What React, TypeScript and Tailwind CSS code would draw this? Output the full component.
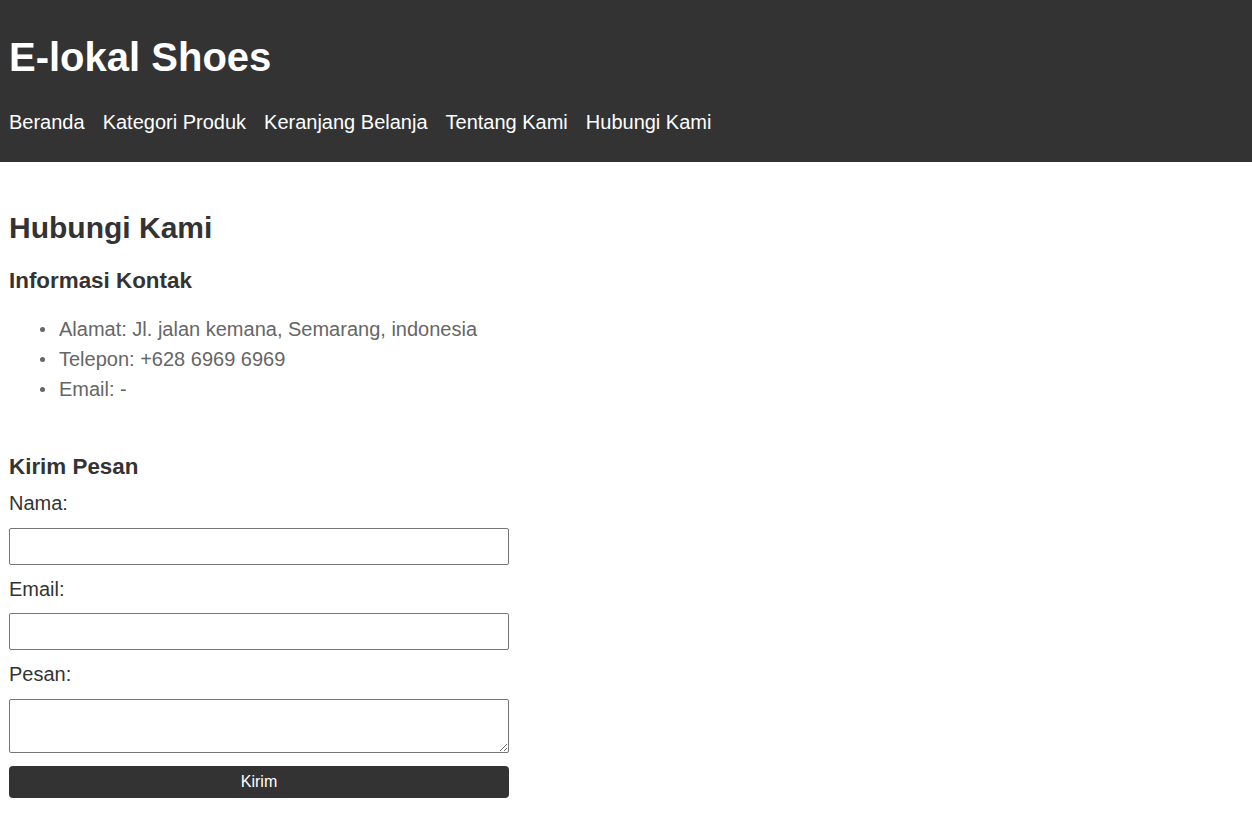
const navItems = ['Beranda', 'Kategori Produk', 'Keranjang Belanja', 'Tentang Kami', 'Hubungi Kami']

const contactInfo = [
  'Alamat: Jl. jalan kemana, Semarang, indonesia',
  'Telepon: +628 6969 6969',
  'Email: -',
]

function Header() {
  return (
    <header className="h-[162px] bg-[#333333] pl-[9px] pt-[34px] text-white">
      <h1 className="text-[40px] font-bold leading-[46px]">E-lokal Shoes</h1>
      <nav className="mt-[30.5px] flex gap-[18px] text-[20px] leading-[23px]">
        {navItems.map((item) => (
          <a key={item} href="#" className="text-white">
            {item}
          </a>
        ))}
      </nav>
    </header>
  )
}

function ContactForm() {
  return (
    <form className="flex flex-col" onSubmit={(e) => e.preventDefault()}>
      <label htmlFor="nama" className="mt-[8px] block text-[20px] leading-[30px] text-[#333333]">
        Nama:
      </label>
      <input
        id="nama"
        type="text"
        className="mt-[10px] h-[37px] w-[500px] rounded-[2px] border border-[#767676] bg-white px-2"
      />

      <label htmlFor="email" className="mt-[9px] block text-[20px] leading-[30px] text-[#333333]">
        Email:
      </label>
      <input
        id="email"
        type="email"
        className="mt-[9px] h-[37px] w-[500px] rounded-[2px] border border-[#767676] bg-white px-2"
      />

      <label htmlFor="pesan" className="mt-[9px] block text-[20px] leading-[30px] text-[#333333]">
        Pesan:
      </label>
      <textarea
        id="pesan"
        className="mt-[10px] h-[54px] w-[500px] rounded-[2px] border border-[#767676] bg-white px-2"
      />

      <button
        type="submit"
        className="mt-[13px] h-[32px] w-[500px] rounded-[4px] bg-[#333333] text-[16px] text-white"
      >
        Kirim
      </button>
    </form>
  )
}

export default function App() {
  return (
    <div className="min-h-[832px] bg-white font-['Liberation_Sans',Arial,sans-serif]">
      <Header />

      <main className="pl-[9px]">
        <h2 className="mt-[48px] text-[30px] font-bold leading-[35px] text-[#333333]">Hubungi Kami</h2>

        <h3 className="mt-[23px] text-[22.4px] font-bold leading-[26px] text-[#333333]">Informasi Kontak</h3>
        <ul className="mt-[20px] flex flex-col text-[20px] leading-[30px] text-[#666666]">
          {contactInfo.map((line) => (
            <li key={line} className="flex items-center">
              <span className="ml-[31px] mr-[14px] h-[5px] w-[5px] rounded-full bg-[#666666]" />
              <span>{line}</span>
            </li>
          ))}
        </ul>

        <h3 className="mt-[50px] text-[22.4px] font-bold leading-[26px] text-[#333333]">Kirim Pesan</h3>
        <ContactForm />
      </main>
    </div>
  )
}
